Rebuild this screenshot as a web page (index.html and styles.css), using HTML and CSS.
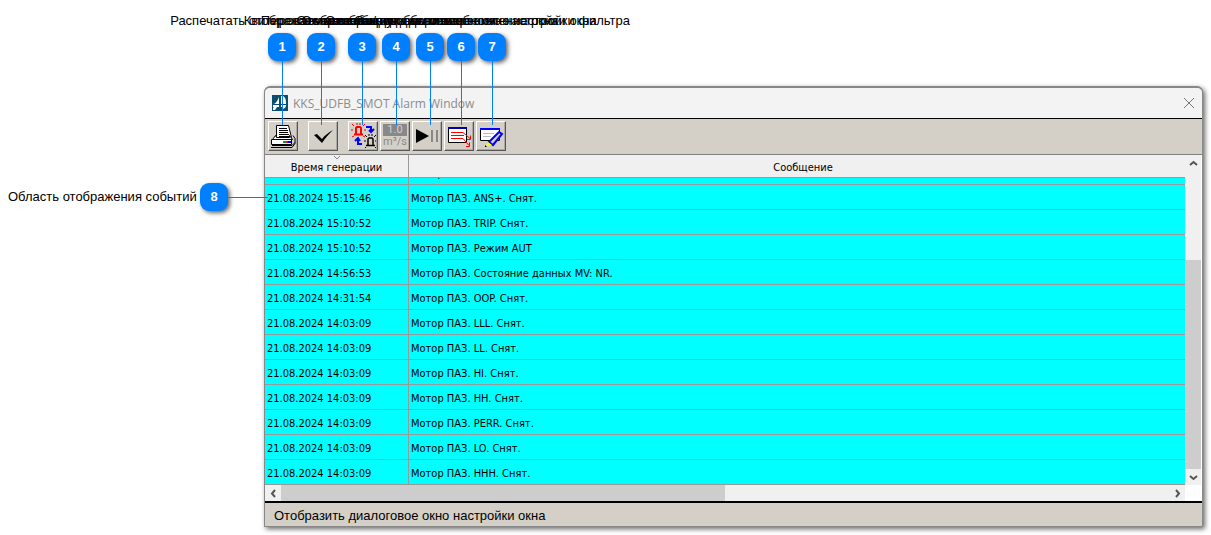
FILE: index.html
```html
<!DOCTYPE html>
<html lang="ru">
<head>
<meta charset="utf-8">
<title>KKS_UDFB_SMOT Alarm Window</title>
<link rel="stylesheet" href="styles.css">
</head>
<body>
<main class="diagram">
  <section class="window">
    <header class="titlebar">
      <svg class="logo" width="16" height="16" viewBox="0 0 16 16"><path fill="#0b4f70" d="M0 0h16v16H0z"/><path fill="#fff" d="M7 2v7H2c2-1 4-4 5-7zM9 1h2c2 1 3 3 3 8H9zM1 10h6v2H5l-2 3H1v-2l1-1H1zM9 10h5c0 2-1 3-3 4v-2H9z"/></svg>
      <h1 class="title">KKS_UDFB_SMOT Alarm Window</h1>
      <button class="close" type="button" aria-label="Закрыть"><svg width="12" height="12" viewBox="0 0 12 12"><path d="M1 1l10 10M11 1L1 11" stroke="#777" fill="none"/></svg></button>
    </header>
    <div class="toolbar">
      <button class="tool tool-spaced" type="button" aria-label="Печать"><svg width="26" height="26" viewBox="0 0 26 26"><path d="M6.500 2.500h12l3 12h-15z" fill="#fff" stroke="#000"/><path d="M9 5.500h8M9 7.500h9M9 9.500h9M9 11.500h10M9 13.500h10" stroke="#000"/><path d="M5.500 12.500l-3 4h20l-3-4v2h-13z" fill="#fff" stroke="#000"/><path d="M1.500 16.500h20v5h-20z" fill="#fff" stroke="#000"/><path d="M2 22.500h20l3-3M1 24.500h21l3-4v-5l-2-3" fill="none" stroke="#000"/><path d="M13 19h3" stroke="#00a020" stroke-width="2"/><path d="M16 19h2" stroke="#f00" stroke-width="2"/><path d="M18 19h3" stroke="#00f" stroke-width="2"/></svg></button>
      <button class="tool tool-spaced" type="button" aria-label="Квитировать"><svg width="26" height="26" viewBox="0 0 26 26"><path d="M4 12l3-1 5 5c3-4 6-6 11-9-4 4-8 8-11 13z" fill="#000"/></svg></button>
      <button class="tool" type="button" aria-label="Сигнализация"><svg width="28" height="28" viewBox="0 0 28 28"><g fill="none"><path d="M7 12V6l1-1h3l1 1v6M5 12.500h9" stroke="#f00" stroke-width="2"/><path d="M3 2l2 2M16 2l-2 2M2 8h2M15 8h2M3 15l2-1M16 15l-2-1M8 1v2M11 1v2" stroke="#f00"/><path d="M17 5h5v5M20 8l2 2 3-3M13 22H9v-5M6 19l3-3 2 3" stroke="#00f" stroke-width="2"/><path d="M19 23v-6l1-1h3l1 1v6M17 23.500h9" stroke="#000" stroke-width="1.500"/><path d="M16 13l2 2M27 13l-2 2M15 19h2M26 19h1M16 26l1-1M27 26l-1-1M20 12v2M23 12v2" stroke="#000"/></g></svg></button>
      <button class="tool tool-units" type="button"><span class="unit-value">1.0</span><span class="unit-name">m³/s</span></button>
      <button class="tool" type="button" aria-label="Пуск и пауза"><svg width="26" height="26" viewBox="0 0 26 26"><path d="M2 6l13 7-13 7z" fill="#000"/><path d="M18 7v12M23 7v12" stroke="#888" stroke-width="2"/></svg></button>
      <button class="tool" type="button" aria-label="Фильтр событий"><svg width="26" height="26" viewBox="0 0 26 26"><path d="M2.500 4.500h18v15h-18z" fill="#fff" stroke="#000"/><path d="M2 5h19" stroke="#00a" stroke-width="2"/><path d="M5 9.500h12l7 6M5 15.500h12l6 7" fill="none" stroke="#f00"/><path d="M5 12.500h13" stroke="#f00"/><path d="M21 16.500h3.500v-4M20 23.500h3.500v-4" fill="none" stroke="#f00"/></svg></button>
      <button class="tool" type="button" aria-label="Настройка окна"><svg width="26" height="26" viewBox="0 0 26 26"><path d="M2.500 5.500h19v12h-19z" fill="#fff" stroke="#000"/><path d="M2 6h20" stroke="#00f" stroke-width="2"/><path d="M5 10.500h11M5 13.500h8" stroke="#bbb"/><path d="M11 19L21 9l3 2-9 11z" fill="#d4d0c8" stroke="#00f" stroke-width="2"/><path d="M8 23l2-4 4 3z" fill="#ff0"/><path d="M7 22l2 2H7z" fill="#000"/></svg></button>
    </div>
    <div class="events">
      <table class="log">
        <thead>
          <tr><th class="time" scope="col"><svg class="sort" width="8" height="5" viewBox="0 0 8 5"><path d="M1 0l3 3 3-3" stroke="#888" fill="none"/></svg>Время генерации</th><th class="message" scope="col">Сообщение</th></tr>
        </thead>
        <tbody>
          <tr class="cut"><td></td><td><div class="clip">Мотор ПАЗ.</div></td></tr>
          <tr><td>21.08.2024 15:15:46</td><td>Мотор ПАЗ. ANS+. Снят.</td></tr>
          <tr><td>21.08.2024 15:10:52</td><td>Мотор ПАЗ. TRIP. Снят.</td></tr>
          <tr><td>21.08.2024 15:10:52</td><td>Мотор ПАЗ. Режим AUT</td></tr>
          <tr><td>21.08.2024 14:56:53</td><td>Мотор ПАЗ. Состояние данных MV: NR.</td></tr>
          <tr><td>21.08.2024 14:31:54</td><td>Мотор ПАЗ. OOP. Снят.</td></tr>
          <tr><td>21.08.2024 14:03:09</td><td>Мотор ПАЗ. LLL. Снят.</td></tr>
          <tr><td>21.08.2024 14:03:09</td><td>Мотор ПАЗ. LL. Снят.</td></tr>
          <tr><td>21.08.2024 14:03:09</td><td>Мотор ПАЗ. HI. Снят.</td></tr>
          <tr><td>21.08.2024 14:03:09</td><td>Мотор ПАЗ. HH. Снят.</td></tr>
          <tr><td>21.08.2024 14:03:09</td><td>Мотор ПАЗ. PERR. Снят.</td></tr>
          <tr><td>21.08.2024 14:03:09</td><td>Мотор ПАЗ. LO. Снят.</td></tr>
          <tr><td>21.08.2024 14:03:09</td><td>Мотор ПАЗ. HHH. Снят.</td></tr>
        </tbody>
      </table>
      <div class="vscroll">
        <button class="arrow" type="button" aria-label="Вверх"><svg width="9" height="9" viewBox="0 0 9 9"><path d="M1 6l3.500-3L8 6" stroke="#555" stroke-width="2" fill="none"/></svg></button>
        <div class="vtrack"><div class="vthumb"></div></div>
        <button class="arrow" type="button" aria-label="Вниз"><svg width="9" height="9" viewBox="0 0 9 9"><path d="M1 3l3.500 3L8 3" stroke="#555" stroke-width="2" fill="none"/></svg></button>
      </div>
      <div class="hscroll">
        <button class="arrow" type="button" aria-label="Влево"><svg width="9" height="9" viewBox="0 0 9 9"><path d="M6 1L3 4.500 6 8" stroke="#555" stroke-width="2" fill="none"/></svg></button>
        <div class="htrack"><div class="hthumb"></div></div>
        <button class="arrow" type="button" aria-label="Вправо"><svg width="9" height="9" viewBox="0 0 9 9"><path d="M3 1l3 3.500L3 8" stroke="#555" stroke-width="2" fill="none"/></svg></button>
      </div>
    </div>
    <footer class="status">Отобразить диалоговое окно настройки окна</footer>
  </section>

  <div class="callout c1"><span class="note">Распечатать отображаемые события</span><b class="badge">1</b></div>
  <div class="callout c2"><span class="note">Квитировать все события</span><b class="badge">2</b></div>
  <div class="callout c3"><span class="note">Переключение между событиями</span><b class="badge">3</b></div>
  <div class="callout c4"><span class="note">Отображение единиц измерения</span><b class="badge">4</b></div>
  <div class="callout c5"><span class="note">Остановить/возобновить обновление окна</span><b class="badge">5</b></div>
  <div class="callout c6"><span class="note">Отобразить диалоговое окно настройки окна</span><b class="badge">6</b></div>
  <div class="callout c7"><span class="note">Открыть диалоговое окно настройки фильтра</span><b class="badge">7</b></div>
  <div class="callout side"><span class="note">Область отображения событий</span><b class="badge">8</b></div>
</main>
</body>
</html>
```
FILE: styles.css
```css
* { box-sizing: border-box; }
body { margin: 0; background: #fff; color: #000; font-family: "Liberation Sans", Arial, sans-serif; font-size: 13px; }
button { border: 0; padding: 0; margin: 0; font: inherit; background: none; }
svg { display: block; flex: none; }
.diagram { position: relative; padding: 86px 8px 8px 264px; }

.window { border: 1px solid #888; border-top-width: 2px; border-radius: 6px 6px 0 0; background: #d4d0c8; box-shadow: 2px 2px 5px rgba(0, 0, 0, .6); }
.titlebar { display: flex; align-items: center; gap: 5px; height: 31px; padding: 0 7px; background: #f3f3f3; border-bottom: 1px solid #000; border-radius: 5px 5px 0 0; }
.title { flex: 1; margin: 0; color: #8c8c8c; font: 12px "Open Sans", "Noto Sans", sans-serif; }
.toolbar { display: flex; gap: 2px; height: 36px; padding: 2px 3px; border-bottom: 1px solid #808080; }
.tool { display: flex; align-items: center; justify-content: center; width: 30px; height: 30px; border: 1px solid #fff; border-right-color: #555; border-bottom-color: #555; box-shadow: inset -1px -1px #aaa; background: #d4d0c8; }
.tool-spaced { margin-right: 8px; }
.tool-units { flex-direction: column; color: #888; font: 11px/12px Roboto, sans-serif; }
.unit-value { width: 24px; background: #888; color: #d4d0c8; }

.events { display: grid; grid-template-columns: 1fr 16px; padding-right: 1px; background: #fff; border-bottom: 2px solid #000; }
.log { width: 100%; table-layout: fixed; border-collapse: separate; border-spacing: 0; font: 11px "DejaVu Sans Condensed", Tahoma, sans-serif; }
.log th { position: relative; height: 23px; padding: 2px 0 0; background: #f0f0f0; border-bottom: 1px solid #999; font-weight: 400; }
.log .time { width: 144px; border-right: 1px solid #999; }
.log .message { padding-left: 12px; }
.sort { position: absolute; top: 1px; left: 50%; margin-left: -4px; }
.log td { height: 25px; padding: 2px 2px 0; background: #0ff; border-bottom: 1px solid #999; white-space: nowrap; }
.log td:first-child { border-right: 1px solid #999; }
.log .cut td { height: 7px; padding: 0 2px; }
.clip { display: flex; align-items: flex-end; height: 6px; padding-bottom: 2px; overflow: hidden; line-height: 16px; }

.arrow { display: flex; align-items: center; justify-content: center; flex: none; width: 16px; height: 16px; background: #f0f0f0; }
.vscroll { display: flex; flex-direction: column; background: #f0f0f0; }
.vtrack { flex: 1; display: flex; flex-direction: column; justify-content: flex-end; }
.vthumb { height: 70%; background: #cdcdcd; }
.hscroll { display: flex; background: #f0f0f0; }
.htrack { flex: 1; }
.hthumb { width: 50%; height: 100%; background: #cdcdcd; }
.status { height: 23px; padding: 0 9px; line-height: 26px; }

.callout { position: absolute; top: 12px; width: 28px; display: flex; flex-direction: column; align-items: center; }
.note { height: 21px; line-height: 17px; white-space: nowrap; }
.badge { flex: none; width: 28px; height: 28px; border-radius: 9px; background: #0080ff; color: #fff; text-align: center; line-height: 28px; box-shadow: 2px 2px 4px rgba(0, 0, 0, .6); }
.callout::after { content: ""; flex: none; width: 1px; height: 64px; background: #0080ff; }
.c1 { left: 268px; }
.c2 { left: 307px; }
.c3 { left: 348px; }
.c4 { left: 382px; }
.c5 { left: 416px; }
.c6 { left: 447px; }
.c7 { left: 478px; }
.side { top: 182px; left: 8px; width: auto; flex-direction: row; }
.side .note { width: 192px; height: auto; line-height: 30px; }
.side::after { width: 40px; height: 1px; }
```
